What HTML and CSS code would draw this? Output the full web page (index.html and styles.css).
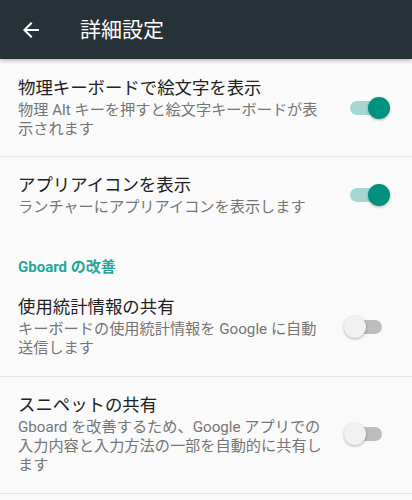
FILE: index.html
```html
<!DOCTYPE html>
<html lang="ja">
<head>
<meta charset="utf-8">
<link rel="stylesheet" href="styles.css">
</head>
<body>
<header class="appbar">
  <svg class="back" width="24" height="24" viewBox="0 0 24 24"><path d="M20 11H7.83l5.59-5.59L12 4l-8 8 8 8 1.41-1.41L7.83 13H20v-2z" fill="#fff"/></svg>
  <h1 class="title">詳細設定</h1>
</header>
<main class="list">
  <div class="row first">
    <div class="text">
      <div class="primary">物理キーボードで絵文字を表示</div>
      <div class="secondary">物理 Alt キーを押すと絵文字キーボードが表示されます</div>
    </div>
    <div class="switch on"><span class="track"></span><span class="knob"></span></div>
  </div>
  <div class="row last">
    <div class="text">
      <div class="primary">アプリアイコンを表示</div>
      <div class="secondary">ランチャーにアプリアイコンを表示します</div>
    </div>
    <div class="switch on"><span class="track"></span><span class="knob"></span></div>
  </div>
  <div class="category">Gboard の改善</div>
  <div class="row">
    <div class="text">
      <div class="primary">使用統計情報の共有</div>
      <div class="secondary">キーボードの使用統計情報を Google に自動送信します</div>
    </div>
    <div class="switch"><span class="track"></span><span class="knob"></span></div>
  </div>
  <div class="row">
    <div class="text">
      <div class="primary">スニペットの共有</div>
      <div class="secondary">Gboard を改善するため、Google アプリでの入力内容と入力方法の一部を自動的に共有します</div>
    </div>
    <div class="switch"><span class="track"></span><span class="knob"></span></div>
  </div>
</main>
</body>
</html>
```
FILE: styles.css
```css
* { box-sizing: border-box; }
html, body { margin: 0; padding: 0; }
body {
  background: #fafafa;
  font-family: Roboto, "Noto Sans CJK JP", sans-serif;
  width: 412px;
  height: 500px;
  overflow: hidden;
}
.appbar {
  height: 59px;
  background: #263238;
  display: flex;
  align-items: center;
  padding-left: 19px;
  box-shadow: 0 2px 4px rgba(0,0,0,0.25);
  position: relative;
  z-index: 1;
}
.back { display: block; flex: none; }
.title {
  margin: 0 0 0 37px;
  color: #fff;
  font-size: 21px;
  font-weight: 400;
  line-height: 28px;
}
.list { display: flex; flex-direction: column; }
.row {
  display: flex;
  align-items: center;
  padding: 16px 18px 18px 18px;
  border-bottom: 1px solid #e3e3e3;
}
.row.first { padding-top: 17px; padding-bottom: 17px; }
.row.last { border-bottom: none; padding-bottom: 16px; }
.text { width: 310px; flex: none; }
.primary {
  font-size: 17.4px;
  line-height: 24px;
  color: #212121;
}
.secondary {
  font-size: 15.2px;
  line-height: 19px;
  color: #757575;
  margin-top: 1px;
}
.category {
  font-size: 15px;
  font-weight: 700;
  color: #26a69a;
  padding: 24px 18px 2px 18px;
  line-height: 20px;
}
.switch {
  margin-left: auto;
  margin-right: 4px;
  width: 46px;
  height: 24px;
  position: relative;
  flex: none;
}
.track {
  position: absolute;
  left: 6px;
  top: 5px;
  width: 32px;
  height: 14px;
  border-radius: 7px;
  background: #bdbdbd;
}
.knob {
  position: absolute;
  left: 0;
  top: 1px;
  width: 22px;
  height: 22px;
  border-radius: 50%;
  background: #f1f1f1;
  box-shadow: 0 1px 3px rgba(0,0,0,0.3);
}
.switch.on .track { background: #a3d7d2; }
.switch.on .knob { left: 24px; background: #00917f; }
```
